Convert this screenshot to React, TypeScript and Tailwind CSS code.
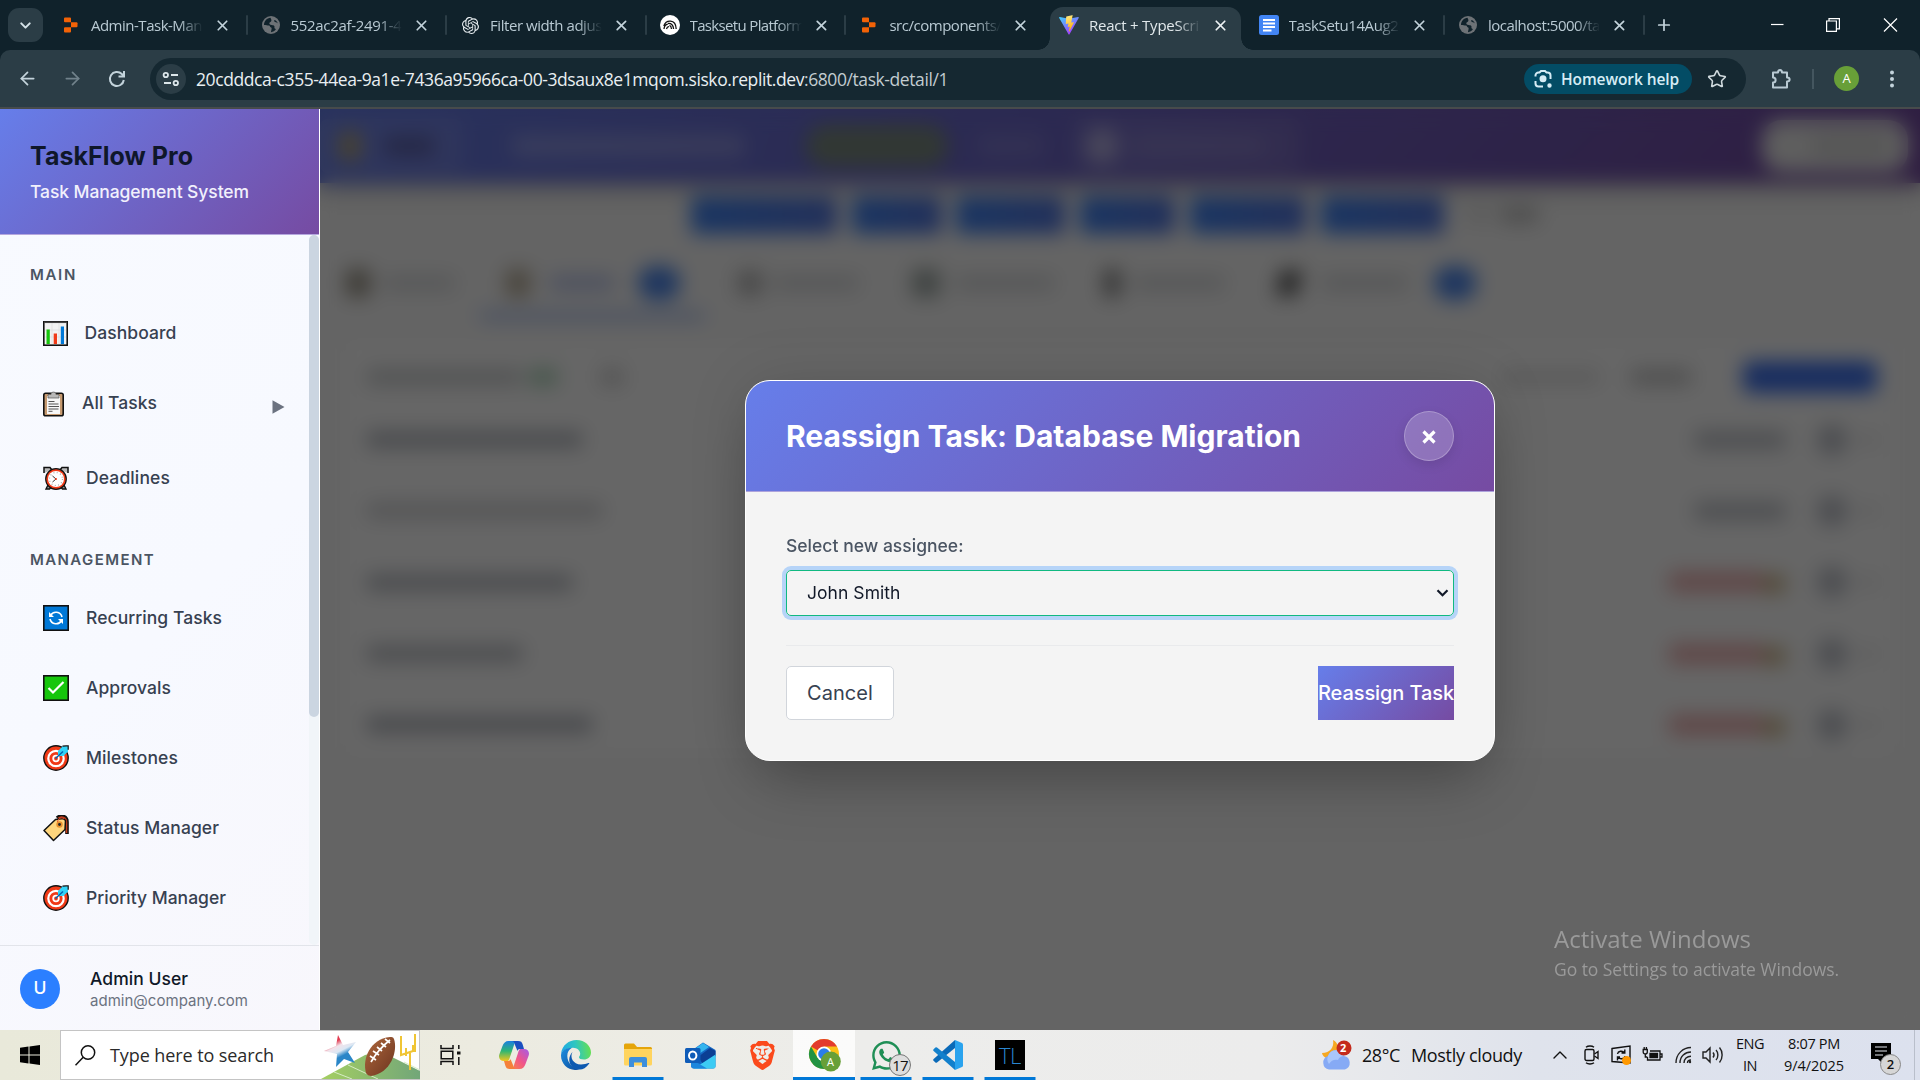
import { useLayoutEffect, useRef, type ReactNode } from 'react';
import { SiOpenai, SiBrave } from 'react-icons/si';
import { FaWhatsapp } from 'react-icons/fa';
import { ArrowLeft, ArrowRight, X, ChevronDown, ChevronUp, Plus, Star } from 'lucide-react';

/* One line of text whose tracking is set so that it spans `w` pixels. */
function Fit({ w, className = '', children }: { w: number; className?: string; children: string }) {
  const ref = useRef<HTMLSpanElement>(null);
  useLayoutEffect(() => {
    const el = ref.current;
    if (!el) return;
    el.style.letterSpacing = '0px';
    const natural = el.getBoundingClientRect().width;
    el.style.letterSpacing = `${(w - natural) / children.length}px`;
  }, [w, children]);
  return (
    <span ref={ref} className={`inline-block shrink-0 whitespace-nowrap ${className}`}>
      {children}
    </span>
  );
}

/* ---------- favicons ---------- */

const Replit = () => (
  <svg width="14" height="16" viewBox="0 0 14 16" fill="#f26207">
    <path d="M1 0.5h5a1 1 0 0 1 1 1V5.3H1a1 1 0 0 1-1-1V1.500a1 1 0 0 1 1-1z" />
    <path d="M7 5.300h5.500a1 1 0 0 1 1 1v3a1 1 0 0 1-1 1H7z" />
    <path d="M0 11.300a1 1 0 0 1 1-1h6v4.200a1 1 0 0 1-1 1H1a1 1 0 0 1-1-1z" />
  </svg>
);

const Globe = () => (
  <svg width="18" height="18" viewBox="0 0 18 18">
    <circle cx="9" cy="9" r="9" fill="#6d7276" />
    <path
      d="M8.500 1.800C5 2 2 5 2 9c2 0 3.500.4 5 .5 1.200.2.8 1.700 2 2 1 .2.600 1.500.4 2.500-.2.800-.5 1.500-.4 2.200 2-.2 4-1.500 5-3.200-1.500-.2-1.800-1-1.500-2.200.2-1-.8-1.600-2-1.600-1.300 0-3-.2-3.200-1.600C7.100 6 8.800 6.200 9.300 5c.4-1-.3-1.800-.8-3.200z"
      fill="#10222b"
    />
    <path d="M12.500 4c-1 1 .2 2.200 1.400 2.300 1 .1 1.400.8 2 1.200C15.500 6 14.300 4.600 12.500 4z" fill="#10222b" />
  </svg>
);

const Setu = () => (
  <svg width="20" height="20" viewBox="0 0 20 20">
    <circle cx="10" cy="10" r="10" fill="#fff" />
    <path
      d="M4 14c.3-3 1.500-4.500 3.800-4.800M3.800 11C5 7.500 7.500 6 10.500 6.200c3.500.3 5.500 3 5.700 7.800M6.500 14c.4-1.700 1.300-2.500 2.500-2.400M8 8.500c3-.5 5.300 1.500 5.600 5.500M9.500 10.300c1.300.5 1.900 1.700 2 3.700"
      fill="none"
      stroke="#111"
      strokeWidth="1.300"
    />
  </svg>
);

const Vite = () => (
  <svg width="20" height="20" viewBox="0 0 20 20">
    <defs>
      <linearGradient id="va" x1="0" y1="0" x2=".6" y2="1">
        <stop offset="0" stopColor="#41d1ff" />
        <stop offset="1" stopColor="#a838fe" />
      </linearGradient>
      <linearGradient id="vb" x1=".4" y1="0" x2=".6" y2="1">
        <stop offset="0" stopColor="#ffea83" />
        <stop offset="1" stopColor="#ffa800" />
      </linearGradient>
    </defs>
    <path d="M19.700 3 10.500 19.300a.6.6 0 0 1-1 0L.2 3a.6.6 0 0 1 .6-.9L10 3.700l9.100-1.600a.6.600 0 0 1 .6.900z" fill="url(#va)" />
    <path d="m14.200.1-6.800 1.300a.3.3 0 0 0-.2.3l-.4 7c0 .2.100.3.300.3l2-.4c.2 0 .4.1.3.3l-.600 2.700c0 .2.200.4.400.3l1.100-.3c.200 0 .400.100.400.300l-.9 4.400c0 .3.300.4.500.2l4.600-8.900c.1-.2-.1-.4-.3-.4l-2 .4c-.2 0-.4-.2-.3-.4L13.600.500c0-.2 0-.4.600-.4z" fill="url(#vb)" />
  </svg>
);

const Docs = () => (
  <svg width="20" height="20" viewBox="0 0 20 20">
    <rect width="20" height="20" rx="2.500" fill="#4285f4" />
    <path d="M4 5h12M4 8.500h12M4 12h12M4 15.500h8.500" stroke="#fff" strokeWidth="1.900" />
  </svg>
);

type TabInfo = { icon: ReactNode; text: string; w: number; active?: boolean; bar?: boolean };

const tabs: TabInfo[] = [
  { icon: <Replit />, text: 'Admin-Task-Man', w: 111, bar: true },
  { icon: <Globe />, text: '552ac2af-2491-4', w: 111, bar: true },
  { icon: <SiOpenai size={17} color="#e8eef1" />, text: 'Filter width adjus', w: 112, bar: true },
  { icon: <Setu />, text: 'Tasksetu Platform', w: 115, bar: true },
  { icon: <Replit />, text: 'src/components/', w: 112 },
  { icon: <Vite />, text: 'React + TypeScri', w: 110, active: true },
  { icon: <Docs />, text: 'TaskSetu14Aug2', w: 110, bar: true },
  { icon: <Globe />, text: 'localhost:5000/ta', w: 112, bar: true },
];

function Tab({ tab }: { tab: TabInfo }) {
  return (
    <div className="relative flex h-[50px] w-[199.6px] shrink-0 items-center">
      {tab.active && (
        <div className="absolute top-[7px] left-[4px] h-[43px] w-[191px] rounded-t-[13px] bg-[#2b3d46]">
          <div className="absolute bottom-0 -left-[12px] h-3 w-3 bg-[radial-gradient(circle_at_0_0,transparent_11.5px,#2b3d46_12px)]" />
          <div className="absolute -right-[12px] bottom-0 h-3 w-3 bg-[radial-gradient(circle_at_100%_0,transparent_11.5px,#2b3d46_12px)]" />
        </div>
      )}
      <div className="relative ml-[12px] flex w-[22px] justify-center">{tab.icon}</div>
      <div
        className={`relative ml-[9px] h-6 w-[112px] text-[15px] leading-[24px] [mask-image:linear-gradient(to_right,#000_78%,transparent)] ${tab.active ? 'text-[#e1e8eb]' : 'text-[#b9cad3]'}`}
      >
        <Fit w={tab.w}>{tab.text}</Fit>
      </div>
      <X className="relative ml-[11px]" size={17} strokeWidth={2.4} color={tab.active ? '#eef2f4' : '#c3d3db'} />
      {tab.bar && <div className="ml-[15px] h-5 w-[2px] rounded bg-[#2b3d46]" />}
    </div>
  );
}

function Browser() {
  return (
    <header className="h-[109px] shrink-0 bg-[#10222b] font-['Open_Sans',sans-serif]">
      <div className="flex h-[50px] items-center">
        <div className="ml-2 flex h-[34px] w-[35px] items-center justify-center rounded-[11px] bg-[#2b3d46]">
          <ChevronDown size={17} strokeWidth={2.8} color="#d5e2e8" />
        </div>
        <div className="ml-[5px] flex">
          {tabs.map((t) => (
            <Tab key={t.text} tab={t} />
          ))}
        </div>
        <Plus className="ml-[10px]" size={18} strokeWidth={2.3} color="#c3d3db" />
        <div className="mr-[22px] ml-auto flex items-center text-white">
          <svg width="14" height="14" viewBox="0 0 14 14">
            <path d="M1 6.500h12.500" stroke="currentColor" strokeWidth="1.200" />
          </svg>
          <svg className="ml-[42px]" width="14" height="14" viewBox="0 0 14 14" fill="none" stroke="currentColor" strokeWidth="1.200">
            <path d="M.6 3h9.800v10.400H.6zM3 3V.6h10.400v10.300h-3" />
          </svg>
          <svg className="ml-[43px]" width="15" height="14" viewBox="0 0 15 14" stroke="currentColor" strokeWidth="1.200">
            <path d="M1 .5 14 13.500M14 .5 1 13.500" />
          </svg>
        </div>
      </div>
      <div className="flex h-[59px] items-center rounded-t-[10px] border-b-2 border-[#474b4c] bg-[#2b3d46]">
        <ArrowLeft className="ml-[17px]" size={21} strokeWidth={2} color="#c3d3db" />
        <ArrowRight className="ml-[24px]" size={21} strokeWidth={2} color="#71828b" />
        <svg className="ml-[25px]" width="18" height="18" viewBox="0 0 18 18" fill="none" stroke="#c3d3db" strokeWidth="2">
          <path d="M15.800 10A7 7 0 1 1 13.800 4L16 6.200M16 1v5.500h-5.500" />
        </svg>
        <div className="mt-px ml-[24px] flex h-[42px] w-[1596px] items-center rounded-full bg-[#152831]">
          <div className="ml-[6px] flex h-[30px] w-[30px] items-center justify-center rounded-full bg-[#2b3d46]">
            <svg width="18" height="16" viewBox="0 0 18 16" fill="none" stroke="#dce6ea" strokeWidth="1.800">
              <circle cx="3.800" cy="4" r="2.200" />
              <path d="M9 4h7M2 12h7" />
              <circle cx="13.800" cy="12" r="2.200" />
            </svg>
          </div>
          <div className="ml-[10px] flex text-[17.5px] text-[#e9eff2]">
            <Fit w={608}>20cdddca-c355-44ea-9a1e-7436a95966ca-00-3dsaux8e1mqom.sisko.replit.dev</Fit>
            <Fit w={144} className="text-[#c2ccd0]">:6800/task-detail/1</Fit>
          </div>
          <div className="ml-auto flex h-[30px] w-[168px] items-center rounded-full bg-[#034c65] text-[#d6ecf5]">
            <svg className="ml-[10px]" width="19" height="19" viewBox="0 0 19 19" fill="none" stroke="currentColor" strokeWidth="2">
              <path d="M1.500 6.500v-1a3 3 0 0 1 3-3h1l1.500-1.500h4l1.500 1.500h1a3 3 0 0 1 3 3v3.500M1.500 11v2.500a3 3 0 0 0 3 3H9" />
              <circle cx="9" cy="8.800" r="2.500" fill="currentColor" />
              <circle cx="15.500" cy="15.500" r="1.200" fill="currentColor" />
            </svg>
            <Fit w={118} className="mt-px ml-[8px] text-[15.5px] font-semibold">Homework help</Fit>
          </div>
          <Star className="mr-[19px] ml-[15px]" size={20} strokeWidth={1.9} color="#d0dade" />
        </div>
        <svg className="ml-[24px]" width="22" height="22" viewBox="0 0 22 22" fill="none" stroke="#b9cad3" strokeWidth="2">
          <path d="M3 4.500h5c0-3.500 4-3.500 4 0h5v5c3.500 0 3.500 4 0 4v6H3v-5c3.500 0 3.500-5 0-5z" strokeLinejoin="round" />
        </svg>
        <div className="ml-[20px] h-5 w-[2px] bg-[#44565f]" />
        <div className="ml-[20px] flex h-[25px] w-[25px] items-center justify-center rounded-full bg-[#689f38] text-[13px] text-white">A</div>
        <svg className="ml-[30px]" width="6" height="18" viewBox="0 0 6 18" fill="#c3d3db">
          <circle cx="3" cy="2.500" r="2" />
          <circle cx="3" cy="9" r="2" />
          <circle cx="3" cy="15.500" r="2" />
        </svg>
      </div>
    </header>
  );
}

/* ---------- sidebar ---------- */

const Chart = () => (
  <svg width="25" height="25" viewBox="0 0 25 25">
    <rect x=".8" y=".8" width="23.400" height="23.400" fill="#f2f2f2" stroke="#111" strokeWidth="1.600" />
    <path d="M9 2v21M16 2v21M2 9h21M2 16h21" stroke="#ddd" strokeWidth=".7" />
    <path d="M1 1.300h23" stroke="#444" strokeWidth="1.500" />
    <path d="M3.500 8.500h3.300V23H3.500z" fill="#16c60c" />
    <path d="M10.700 12.500H14V23h-3.300z" fill="#f03a17" />
    <path d="M17.800 5.500H21V23h-3.200z" fill="#0078d7" />
  </svg>
);

const Clip = () => (
  <svg width="21" height="26" viewBox="0 0 21 26">
    <rect x=".8" y="2.300" width="19.400" height="22.500" rx="1.800" fill="#c69a70" stroke="#111" strokeWidth="1.600" />
    <path d="M4 5h13v18H4z" fill="#f7f7f7" />
    <path d="M5 3.500h3C8 .3 13 .3 13 3.500h3V7H5z" fill="#b8b8b8" stroke="#555" strokeWidth=".7" />
    <path d="M5.500 10.500h6M5.500 13h10M5.500 15.500h10.500M5.500 18h10M5.500 20.300h4" stroke="#555" strokeWidth="1" />
  </svg>
);

const Clock = () => (
  <svg width="26" height="25" viewBox="0 0 26 25">
    <path d="M1 7V1.500h6L9 4M25 7V1.500h-6L17 4" fill="#bbb" stroke="#111" strokeWidth="1.500" />
    <path d="m5 19-2 4h3.500l2-2M21 19l2 4h-3.500l-2-2" fill="#999" stroke="#111" strokeWidth="1.400" />
    <circle cx="13" cy="13" r="10.300" fill="#f03a17" stroke="#111" strokeWidth="1.200" />
    <circle cx="13" cy="13" r="8" fill="#fff" />
    <circle cx="13" cy="13" r="6.500" fill="none" stroke="#aaa" strokeWidth="1.200" strokeDasharray="1 2.400" />
    <path d="m9.500 10 3.500 3-3.500 3" fill="none" stroke="#333" strokeWidth="1" />
    <circle cx="13" cy="13" r="1" fill="#f03a17" />
  </svg>
);

const Cycle = () => (
  <svg width="26" height="26" viewBox="0 0 26 26">
    <rect x=".8" y=".8" width="24.400" height="24.400" fill="#0078d7" stroke="#111" strokeWidth="1.600" />
    <path d="M7.500 10.500A6.200 6.200 0 0 1 19 12M18.500 15.500A6.200 6.200 0 0 1 7 14" fill="none" stroke="#fff" strokeWidth="1.600" />
    <path d="M6 7v5h5zM20 19v-5h-5z" fill="#fff" />
  </svg>
);

const Check = () => (
  <svg width="26" height="26" viewBox="0 0 26 26">
    <rect x=".8" y=".8" width="24.400" height="24.400" fill="#16c60c" stroke="#111" strokeWidth="1.600" />
    <path d="m5.500 13 4.500 4.500L20.500 7" fill="none" stroke="#fff" strokeWidth="2.200" />
  </svg>
);

const Target = () => (
  <svg width="26" height="26" viewBox="0 0 26 26">
    <circle cx="13" cy="13" r="12.200" fill="#f03a17" stroke="#111" strokeWidth="1.400" />
    <circle cx="13" cy="13.500" r="7.700" fill="none" stroke="#fff" strokeWidth="2.200" />
    <circle cx="13" cy="13.500" r="2.800" fill="none" stroke="#fff" strokeWidth="1.800" />
    <path d="M15 10V6l5-5 5.300.2L25 6.500 20.500 11 16 11z" fill="#31d2f7" />
    <path d="M19.500 1.200 23 .8h2.200v4" fill="none" stroke="#111" strokeWidth="1.200" />
    <path d="m12.500 13.500 7.500-7" stroke="#0063b1" strokeWidth="1.400" />
  </svg>
);

const Tag = () => (
  <svg width="26" height="27" viewBox="0 0 26 27">
    <path d="M14 3C18-.5 24 1 24 7v12" fill="none" stroke="#111" strokeWidth="3.600" />
    <path d="M15 3.500C18.500.800 23.500 2 23.500 7.500V18" fill="none" stroke="#c23b16" strokeWidth="1.600" />
    <path d="m1 15.500 11.500-11 7.500-1 2.500 2-.5 9-11.500 11z" fill="#ffd67d" stroke="#111" strokeWidth="1.500" strokeLinejoin="round" />
    <circle cx="16.500" cy="9.500" r="3.200" fill="#e8912d" />
    <circle cx="16.500" cy="9.500" r="1.400" fill="#222" />
    <path d="M14.500 7C15 3.500 18 2 21 3.500" fill="none" stroke="#e8492d" strokeWidth="1" />
  </svg>
);

function NavItem({ icon, w, gap, h, children }: { icon: ReactNode; w: number; gap: string; h: string; children: string }) {
  return (
    <div className={`flex shrink-0 items-center pl-[42.5px] ${h}`}>
      {icon}
      <Fit w={w} className={`text-[17.5px] font-[450] text-[#374151] ${gap}`}>{children}</Fit>
      {children === 'All Tasks' && (
        <svg className="mt-[6px] ml-[115px]" width="13" height="14" viewBox="0 0 13 14">
          <path d="M.5.300v13.400L12.500 7z" fill="#6b7280" />
        </svg>
      )}
    </div>
  );
}

function Sidebar() {
  return (
    <aside className="flex w-[320px] shrink-0 flex-col border-r border-white bg-[linear-gradient(135deg,#f8faff_0%,#f7f9ff_55%,#f8f7fc_100%)] font-['Inter',sans-serif]">
      <div className="flex h-[126px] shrink-0 flex-col items-start border-b border-[#b5a7de] bg-[linear-gradient(135deg,#667eea,#764ba2)] pt-[29px] pl-[30px]">
        <Fit w={163} className="text-[25px] leading-[36px] font-bold text-[#0f172a]">TaskFlow Pro</Fit>
        <Fit w={219} className="text-[17.5px] leading-[36px] font-[450] text-[#f1f0fc]">Task Management System</Fit>
      </div>
      <div className="flex h-[710px] shrink-0">
        <nav className="flex flex-1 flex-col">
          <Fit w={47} className="mt-[29px] ml-[30px] self-start text-[15px] leading-[22px] font-semibold text-[#4b5563]">MAIN</Fit>
          <div className="mt-[12px] flex flex-col">
            <NavItem icon={<Chart />} w={92} gap="ml-[17px]" h="h-[70px]">Dashboard</NavItem>
            <NavItem icon={<Clip />} w={75} gap="ml-[18.5px]" h="h-[71px]">All Tasks</NavItem>
            <NavItem icon={<Clock />} w={84} gap="ml-[17.5px]" h="h-[78px]">Deadlines</NavItem>
          </div>
          <Fit w={125} className="mt-[32px] ml-[30px] self-start text-[15px] leading-[22px] font-semibold text-[#4b5563]">MANAGEMENT</Fit>
          <div className="mt-[12px] flex flex-col">
            <NavItem icon={<Cycle />} w={136} gap="ml-[17.5px]" h="h-[70px]">Recurring Tasks</NavItem>
            <NavItem icon={<Check />} w={85} gap="ml-[17.5px]" h="h-[70px]">Approvals</NavItem>
            <NavItem icon={<Target />} w={92} gap="ml-[17.5px]" h="h-[70px]">Milestones</NavItem>
            <NavItem icon={<Tag />} w={133} gap="ml-[17.5px]" h="h-[70px]">Status Manager</NavItem>
            <NavItem icon={<Target />} w={140} gap="ml-[17.5px]" h="h-[70px]">Priority Manager</NavItem>
          </div>
        </nav>
        <div className="w-[10px] rounded-[5px] bg-[#f1f5f9]">
          <div className="h-[482px] rounded-[5px] bg-[#cbd5e1]" />
        </div>
      </div>
      <div className="flex flex-1 items-center border-t border-[#e2e4ea] pt-px pl-5">
        <div className="flex h-10 w-10 items-center justify-center rounded-full bg-[#2b7fff] text-[17.5px] font-medium text-white">U</div>
        <div className="ml-[30px] flex flex-col items-start">
          <Fit w={98} className="text-[17.5px] leading-[23px] font-[450] text-[#101828]">Admin User</Fit>
          <Fit w={158} className="text-[15px] leading-[21px] text-[#6b7280]">admin@company.com</Fit>
        </div>
      </div>
    </aside>
  );
}

/* ---------- dimmed page behind the dialog ---------- */

const actionButtons = ['w-[146px]', 'w-[90px] ml-[15px]', 'w-[109px] ml-[14px]', 'w-[95px] ml-[15px]', 'w-[116px] ml-[15px]', 'w-[123px] ml-[15px]'];

const taskRows = [
  { left: 'w-[215px] bg-[#b0b4bc]', late: false },
  { left: 'w-[235px] bg-[#cfd0d3]', late: false },
  { left: 'w-[205px] bg-[#b3b7be]', late: true },
  { left: 'w-[155px] bg-[#b8bbc1]', late: true },
  { left: 'w-[225px] bg-[#acb0b8]', late: true },
];

function DetailPage() {
  return (
    <div className="flex h-full flex-col bg-[#fafafa]">
      <div className="flex h-[74px] shrink-0 items-center bg-[linear-gradient(135deg,#667eea,#764ba2)] shadow-[0_5px_20px_rgba(0,0,0,0.25)]">
        <div className="flex h-[54px] w-[142px] items-center rounded-lg bg-white/10 pl-[20px]">
          <div className="h-7 w-5 rounded bg-[#b8a870]" />
          <div className="ml-[24px] h-[18px] w-[50px] bg-[#4a4880]/60" />
        </div>
        <div className="ml-[50px] h-[22px] w-[232px] bg-white/25" />
        <div className="ml-[62px] h-[42px] w-[142px] rounded-[20px] bg-[#7c8c80]" />
        <div className="ml-[30px] h-[24px] w-[66px] bg-white/12" />
        <div className="ml-[30px] flex h-[54px] w-[226px] items-center rounded-lg bg-white/10 pl-[12px]">
          <div className="h-9 w-8 rounded-full bg-white/45" />
          <div className="ml-[16px] h-[18px] w-[130px] bg-white/12" />
        </div>
        <div className="mr-[12px] ml-auto flex h-[52px] w-[146px] items-center justify-end rounded-[20px] bg-[#ececec] pr-[20px]">
          <div className="h-5 w-[76px] bg-[#d4d4d4]" />
        </div>
      </div>
      <div className="flex h-[63px] shrink-0 items-center pl-[371px]">
        {actionButtons.map((b) => (
          <div key={b} className={`h-[38px] shrink-0 bg-[linear-gradient(90deg,#4084f4,#5578e0)] ${b}`} />
        ))}
        <div className="ml-[24px] h-4 w-5 bg-[#e0e0e0]" />
        <div className="ml-[12px] h-4 w-[38px] bg-[#c0c0c0]" />
      </div>
      <div className="flex h-[73px] shrink-0 items-center">
        <div className="ml-[26px] h-[28px] w-[24px] rounded bg-[#9a9486]" />
        <div className="ml-[14px] h-[14px] w-[70px] bg-[#d6d8da]" />
        <div className="relative ml-[26px] flex h-full w-[224px] items-center border-b-[6px] border-[#88a8ee] pt-[6px]">
          <div className="ml-[26px] h-[28px] w-[24px] rounded bg-[#b8ad98]" />
          <div className="ml-[20px] h-[14px] w-[64px] bg-[#b8c4ec]" />
          <div className="ml-[24px] h-[34px] w-[42px] rounded-[16px] bg-[#4a86ee]" />
        </div>
        <div className="ml-[34px] h-[24px] w-[24px] bg-[#b4b4b4]" />
        <div className="ml-[12px] h-[14px] w-[84px] bg-[#d4d6d8]" />
        <div className="ml-[54px] h-[28px] w-[28px] bg-[#9fa9a5]" />
        <div className="ml-[16px] h-[14px] w-[98px] bg-[#d4d6d8]" />
        <div className="ml-[50px] h-[28px] w-[16px] bg-[#808080]" />
        <div className="ml-[14px] h-[14px] w-[90px] bg-[#d4d6d8]" />
        <div className="ml-[54px] h-[26px] w-[22px] -skew-x-12 bg-[#606060]" />
        <div className="ml-[22px] h-[14px] w-[86px] bg-[#d4d6d8]" />
        <div className="ml-[26px] h-[34px] w-[42px] rounded-[16px] bg-[#4a86ee]" />
      </div>
      <div className="mx-[25px] mt-[24px] h-[410px] shrink-0 rounded-lg bg-white">
        <div className="mt-[6px] flex h-[55px] items-center pl-[22px]">
          <div className="h-4 w-[154px] bg-[#cccfd0]" />
          <div className="ml-[8px] h-4 w-[28px] bg-[#a8d4b6]" />
          <div className="ml-[44px] h-4 w-[22px] bg-[#cccccc]" />
          <div className="mr-[32px] ml-auto h-3 w-[96px] bg-[#dcdcdc]" />
          <div className="mr-[52px] h-4 w-[60px] bg-[#c6c6c6]" />
          <div className="mr-[18px] h-[32px] w-[134px] rounded-md bg-[#3b70ee]" />
        </div>
        {taskRows.map((r, i) => (
          <div key={i} className="flex h-[71.3px] items-center pl-[22px]">
            <div className={`h-[15px] ${r.left}`} />
            <div className="ml-auto flex items-center">
              {r.late ? (
                <>
                  <div className="h-[20px] w-[94px] rounded bg-[#eeb0b0]" />
                  <div className="mt-[4px] h-[18px] w-[22px] bg-[#cdb586]" />
                </>
              ) : (
                <div className="h-[18px] w-[90px] bg-[#c2c5cb]" />
              )}
              <div className="ml-[32px] h-[32px] w-[30px] rounded-full bg-[#bfc2ca]" />
              <div className="mr-[18px] ml-[12px] h-[10px] w-[18px] bg-[#e2e2e2]" />
            </div>
          </div>
        ))}
      </div>
    </div>
  );
}

function Dialog() {
  return (
    <div className="absolute top-[271px] left-[425px] flex h-[381px] w-[750px] flex-col overflow-hidden rounded-[25px] border border-white bg-[#f4f4f4] font-['Inter',sans-serif] shadow-[0_31px_62px_-15px_rgba(0,0,0,0.25),0_0_60px_rgba(0,0,0,0.12)]">
      <div className="flex h-[111px] shrink-0 items-center justify-between border-b border-[#ada3dc] bg-[linear-gradient(135deg,#667eea,#764ba2)] px-[40px]">
        <Fit w={515} className="text-[30px] font-bold text-white">Reassign Task: Database Migration</Fit>
        <div className="flex h-[50px] w-[50px] items-center justify-center rounded-full border border-white/25 bg-white/20 shadow-[0_4px_12px_rgba(0,0,0,0.1)]">
          <svg className="mt-[2px]" width="14" height="14" viewBox="0 0 14 14" stroke="#fff" strokeWidth="3.200">
            <path d="m1.500 1.500 11 11M12.500 1.500l-11 11" />
          </svg>
        </div>
      </div>
      <div className="flex flex-col px-[40px] pt-[41px]">
        <Fit w={177.500} className="self-start text-[17.5px] leading-[26px] font-[450] text-[#4b5563]">Select new assignee:</Fit>
        <div className="mt-[11px] flex h-[46px] items-center justify-between rounded-[5px] border border-[#10b981] pr-[4px] pl-[20px] shadow-[0_0_0_4px_#b6d4f8]">
          <Fit w={93.500} className="text-[17.5px] text-[#111827]">John Smith</Fit>
          <svg width="13" height="8" viewBox="0 0 13 8" fill="none" stroke="#111827" strokeWidth="2.200">
            <path d="m1.500 1.200 5 5 5-5" />
          </svg>
        </div>
        <div className="mt-[29px] flex justify-between border-t border-[#e9eaec] pt-[20px]">
          <div className="flex h-[54px] w-[108px] items-center rounded-[5px] border border-[#d1d5db] bg-white pl-[20px]">
            <Fit w={66} className="text-[20px] text-[#374151]">Cancel</Fit>
          </div>
          <div className="flex h-[54px] w-[136px] items-center bg-[linear-gradient(135deg,#667eea,#764ba2)]">
            <Fit w={136} className="text-[20px] font-[450] text-white">Reassign Task</Fit>
          </div>
        </div>
      </div>
    </div>
  );
}

/* ---------- taskbar ---------- */

const Football = () => (
  <svg width="100" height="48" viewBox="0 0 100 48">
    <defs>
      <linearGradient id="field" x1="0" x2="1">
        <stop offset="0" stopColor="#a5cf62" />
        <stop offset="1" stopColor="#72a679" />
      </linearGradient>
      <linearGradient id="ball" x1="0" y1="0" x2="1" y2="1">
        <stop offset="0" stopColor="#b0683c" />
        <stop offset="1" stopColor="#6b3420" />
      </linearGradient>
      <linearGradient id="star" x1="0" y1="0" x2=".5" y2="1">
        <stop offset=".3" stopColor="#e23a50" />
        <stop offset=".45" stopColor="#f2e3ea" />
        <stop offset=".6" stopColor="#dce8f4" />
        <stop offset=".75" stopColor="#2a86c8" />
      </linearGradient>
    </defs>
    <path d="M1 48 45 24 60 20 100 40v8H1z" fill="url(#field)" />
    <path d="m14 41 18 7M28 34l30 14M84 31l16 8" stroke="#d6ebc4" strokeWidth="1" />
    <path d="m18 4 5 10 13-3-8 10 7 11-11-4-8 8 1-13L4 20l12-5z" fill="url(#star)" />
    <path d="M74 8c4 12-3 34-23 37-2 0-4-1-5-3C42 28 50 8 70 6c2 0 3 0 4 2z" fill="url(#ball)" />
    <path d="M51 31c4-7 10-15 19-22M50 25l6 4M53 20l6 4M57 16l5 4M61 12l5 4M65 8l5 4" stroke="#fff" strokeWidth="1.700" fill="none" />
    <path d="M81 8v16l12-4M93 14V21M86 25v-8M90 22v17M95 3v18M81 8V5" stroke="#f0c535" strokeWidth="2" fill="none" />
  </svg>
);

const Copilot = () => (
  <svg width="30" height="28" viewBox="0 0 30 28">
    <defs>
      <linearGradient id="cpa" x1="0" y1="0" x2="0" y2="1">
        <stop offset="0" stopColor="#1b7fe0" />
        <stop offset=".5" stopColor="#2fb673" />
        <stop offset="1" stopColor="#f4c51c" />
      </linearGradient>
      <linearGradient id="cpb" x1="1" y1="0" x2="0" y2="1">
        <stop offset="0" stopColor="#a45be8" />
        <stop offset=".5" stopColor="#f0548a" />
        <stop offset="1" stopColor="#fb8b3d" />
      </linearGradient>
    </defs>
    <path d="M21 8h4c4 0 6 3 4.500 7l-3 8c-1 3-3 5-6 5H10c3 0 4-1 5-4l4-12c.500-2 1-3 2-4z" fill="url(#cpb)" />
    <path d="M9 20H5c-4 0-6-3-4.500-7l3-8c1-3 3-5 6-5H20c-3 0-4 1-5 4l-4 12c-.5 2-1 3-2 4z" fill="url(#cpa)" />
    <path d="M13 0h6c3 0 4 1 4.700 3.500L25 8h-4c-1.500 0-2 .5-2.500 2L16 4c-.6-2-1-4-3-4z" fill="#1a4fc0" />
    <path d="M17 28h-6c-3 0-4-1-4.700-3.500L5 20h4c1.500 0 2-.5 2.500-2L14 24c.6 2 1 4 3 4z" fill="#f5813a" />
  </svg>
);

const Edge = () => (
  <svg width="30" height="30" viewBox="0 0 30 30">
    <defs>
      <linearGradient id="ea" x1="0" y1=".5" x2="1" y2=".4">
        <stop offset="0" stopColor="#1ea7e6" />
        <stop offset=".5" stopColor="#2fc6c0" />
        <stop offset="1" stopColor="#66e04e" />
      </linearGradient>
      <linearGradient id="eb" x1="0" y1="0" x2="1" y2="1">
        <stop offset="0" stopColor="#1b8fe0" />
        <stop offset="1" stopColor="#0c4a9c" />
      </linearGradient>
    </defs>
    <path d="M0 14C1 5 8 0 15.500 0 24 0 30 6 30 12.500c0 4.500-3.500 7-7 7-3 0-5-1-5-2.300 0-.9 1.200-1.300 1.200-3.700 0-3-3-5.800-7.200-5.800C6 7.700 1 11 0 14z" fill="url(#ea)" />
    <path d="M0 15.500C0 10.500 5 7.700 11 7.700c-3 1.500-4.700 4.500-4.700 8.300 0 7 5.700 12.300 12 13.500C9 32 0 25 0 15.500z" fill="url(#eb)" />
    <path d="M11.500 12c-3 5 .5 12.500 8.500 12.500 3 0 5.500-.8 7.500-1.500.8-.3 1 .2.600.7C25 28 21 30 18 29.500 9 29 5 19 11.500 12z" fill="#0d59b0" />
  </svg>
);

const Explorer = () => (
  <svg width="28" height="24" viewBox="0 0 28 24">
    <path d="M0 2a1.500 1.500 0 0 1 1.500-1.500H10L13 4h13.500A1.500 1.500 0 0 1 28 5.500V10H0z" fill="#e5a50a" />
    <path d="M0 6h28v15a1.500 1.500 0 0 1-1.500 1.500h-25A1.500 1.500 0 0 1 0 21z" fill="#ffd45e" />
    <path d="M5 24v-8a2 2 0 0 1 2-2h14a2 2 0 0 1 2 2v8h-5v-4.500h-8V24z" fill="#3d8fdc" />
  </svg>
);

const Outlook = () => (
  <svg width="31" height="27" viewBox="0 0 31 27">
    <path d="M6 9 18 .5 30.500 8v16a2.500 2.500 0 0 1-2.500 2.500H9A3 3 0 0 1 6 24z" fill="#1568c4" />
    <path d="M8 8 18 1l6 4-13 9z" fill="#35b5ee" />
    <path d="m13 15 12-9 5.500 3v5L18 22z" fill="#0b3f94" />
    <path d="m9 26.500 21.500-14V24a2.500 2.500 0 0 1-2.500 2.500z" fill="#3ccbf4" />
    <path d="M6 17 22 26.500H9A3 3 0 0 1 6 24z" fill="#1b86dd" />
    <rect x="0" y="6" width="15.500" height="15" rx="1.500" fill="#0f5cb8" />
    <ellipse cx="7.700" cy="13.500" rx="3.700" ry="4.100" fill="none" stroke="#fff" strokeWidth="2" />
  </svg>
);

const Chrome = () => (
  <svg width="34" height="34" viewBox="0 0 34 34">
    <circle cx="17" cy="16" r="15" fill="#fbc116" />
    <path d="M17 16 4 8.500A15 15 0 0 1 30 8.500H17z" fill="#e33b2e" />
    <path d="M4 8.500A15 15 0 0 0 17 31l6.500-11.300L10.500 19.700z" fill="#229342" />
    <circle cx="17" cy="16" r="7.500" fill="#fff" />
    <circle cx="17" cy="16" r="5.800" fill="#2a7de9" />
    <circle cx="23.800" cy="23.500" r="10" fill="#689f38" />
  </svg>
);

const VsCode = () => (
  <svg width="30" height="30" viewBox="0 0 30 30">
    <path d="M22 0v8L4 22.500a1.300 1.300 0 0 1-1.600 0l-1.800-1.700a1.200 1.200 0 0 1 0-1.700z" fill="#0a6ab8" />
    <path d="M22 30v-8L4 7.500a1.300 1.300 0 0 0-1.600 0L.6 9.200a1.200 1.200 0 0 0 0 1.700z" fill="#1280cc" />
    <path d="M22 0 29 3a1.800 1.800 0 0 1 1 1.600v20.800A1.800 1.800 0 0 1 29 27l-7 3z" fill="#2aa3ee" />
  </svg>
);

const Weather = () => (
  <svg width="32" height="30" viewBox="0 0 32 30">
    <path d="M12 0c1.500 7-3 13-11 13 1 5 8 8 13 3s4-13-2-16z" fill="#f6a821" />
    <path d="M8 29.500a7 7 0 0 1-1-13.500A8.500 8.500 0 0 1 23 16a7 7 0 0 1 1 13.500z" fill="#86aaf5" />
    <path d="M8 24a8 8 0 0 1-1-8 8.500 8.500 0 0 1 16 0c-2 0-5 1-6 4-3-1-7 0-9 4z" fill="#a9c6fb" />
    <circle cx="23" cy="8" r="7.500" fill="#c42b1c" />
  </svg>
);

function AppButton({ className = '', children, open }: { className?: string; children: ReactNode; open?: string }) {
  return (
    <div className={`relative flex h-[50px] w-[62px] shrink-0 items-center justify-center ${className}`}>
      {children}
      {open && <div className={`absolute bottom-0 left-1/2 h-[3px] -translate-x-1/2 bg-[#0078d7] ${open}`} />}
    </div>
  );
}

function Taskbar() {
  return (
    <footer className="flex h-[50px] shrink-0 items-center bg-[linear-gradient(90deg,#e9e9da_0%,#ecebe0_25%,#ededeb_45%,#ececec_66%,#dfe3ec_80%,#dce1ee_100%)] font-['Open_Sans',sans-serif] text-[#111]">
      <svg className="ml-[20px]" width="20" height="20" viewBox="0 0 20 20">
        <path d="M0 2.800 8.500 1.600v7.900H0zM9.500 1.500 20 0v9.500H9.500zM0 10.500h8.500v7.900L0 17.200zM9.500 10.500H20V20L9.500 18.500z" />
      </svg>
      <div className="ml-[20px] flex h-[50px] w-[360px] items-center border border-[#c4c4c4] bg-white">
        <svg className="ml-[14px]" width="21" height="21" viewBox="0 0 21 21" fill="none" stroke="#111" strokeWidth="1.500">
          <circle cx="13" cy="7.500" r="6.700" />
          <path d="M8.200 12.300.5 20.300" />
        </svg>
        <Fit w={164} className="ml-[14px] text-[18px] text-[#2a2a2a]">Type here to search</Fit>
        <div className="-mr-px ml-auto">
          <Football />
        </div>
      </div>
      <svg className="ml-[20px]" width="21" height="20" viewBox="0 0 21 20" fill="none" stroke="#111" strokeWidth="1.500">
        <path d="M1 0v3.500h12V0M1 20v-3.500h12V20M1.200 6.200h11.600v7.600H1.200zM18.800 0v4M18.800 12v8" />
        <path d="M17 8h3.500" strokeWidth="3" />
      </svg>
      <AppButton className="ml-[22px]"><Copilot /></AppButton>
      <AppButton><Edge /></AppButton>
      <AppButton open="w-[51px]"><Explorer /></AppButton>
      <AppButton><Outlook /></AppButton>
      <AppButton><SiBrave size={29} color="#fb4a1c" /></AppButton>
      <AppButton className="bg-white/75" open="w-[62px]">
        <Chrome />
        <span className="absolute top-[24px] left-[34px] text-[11px] leading-[16px] text-white">A</span>
      </AppButton>
      <AppButton open="w-[51px]">
        <FaWhatsapp size={33} color="#1f8f56" />
        <span className="absolute top-[24px] left-[34px] flex h-[22px] w-[22px] items-center justify-center rounded-full border border-[#777] bg-[#dedede] text-[15px] tracking-[-0.8px]">17</span>
      </AppButton>
      <AppButton open="w-[51px]"><VsCode /></AppButton>
      <AppButton open="w-[51px]">
        <div className="flex h-[30px] w-[30px] items-center justify-center bg-black text-[22px] leading-none font-light tracking-[-0.5px] text-[#2a86d0]">TL</div>
      </AppButton>
      <div className="relative ml-auto">
        <Weather />
        <span className="absolute top-0 left-[19px] text-[11px] leading-[16px] font-bold text-white">2</span>
      </div>
      <Fit w={38} className="ml-[9px] text-[18px]">28°C</Fit>
      <Fit w={111} className="ml-[11px] text-[18px]">Mostly cloudy</Fit>
      <ChevronUp className="ml-[26px]" size={24} strokeWidth={1.4} />
      <svg className="ml-[12px]" width="15" height="20" viewBox="0 0 15 20" fill="none" stroke="#111" strokeWidth="1.400">
        <rect x="1" y="4.500" width="9" height="11" rx="1.500" />
        <path d="m10.500 9 3.500-2.500v7L10.500 11M2 2.200c2-1.600 6-1.600 8 0M2 17.800c2 1.600 6 1.600 8 0" />
      </svg>
      <svg className="ml-[12px]" width="21" height="20" viewBox="0 0 21 20" fill="none" stroke="#111" strokeWidth="1.400">
        <path d="M1 3.500 19 1v17L1 16.500z" />
        <path d="M6.500 9c.5-3 5-4 7-1M13.800 4.500V8h-3.300M14 11c-.5 3-5 4-7 1M6.500 15.500V12H9" />
        <circle cx="15.500" cy="15.500" r="4.500" fill="#ff9800" stroke="none" />
      </svg>
      <svg className="ml-[10px]" width="21" height="16" viewBox="0 0 21 16" fill="none" stroke="#111" strokeWidth="1.300">
        <path d="M8 4h10v9H5.500v-3M18.500 7h1.500v3h-1.500M1.200 2.500h4.100v2.500c0 1.400-1 2-2 2s-2.100-.6-2.100-2zM2.200 0v2.500M4.400 0v2.500M3.300 7v3h2" />
        <path d="M8 6.500h7.500v4H8z" fill="#111" />
      </svg>
      <svg className="ml-[12px]" width="17" height="18" viewBox="0 0 17 18" fill="none" stroke="#222" strokeWidth="1.400">
        <path d="M1 17C1 8 8 1.500 16 1.500M5 17C5 10.500 10 6 16 6M9 17c0-4 3-6.800 7-6.800M12.500 17c0-2 1.500-3 3.500-3" />
        <circle cx="15" cy="16" r="1.200" fill="#222" stroke="none" />
      </svg>
      <svg className="ml-[10px]" width="22" height="18" viewBox="0 0 22 18" fill="none" stroke="#222" strokeWidth="1.400">
        <path d="M1 6v6h3l4 4V2L4 6zM11 6.500c1.200 1.400 1.200 3.600 0 5M14 4c2.500 2.500 2.500 7.500 0 10M17.500 1.500c3.500 4 3.500 11 0 15" />
      </svg>
      <div className="ml-[12px] flex flex-col items-center text-[14.5px] leading-[22px]">
        <Fit w={28}>ENG</Fit>
        <Fit w={14}>IN</Fit>
      </div>
      <div className="ml-[20px] flex flex-col items-center text-[14.5px] leading-[22px]">
        <Fit w={52}>8:07 PM</Fit>
        <Fit w={60}>9/4/2025</Fit>
      </div>
      <div className="relative ml-[27px] h-[32px] w-[31px]">
        <svg className="mt-[4px]" width="20" height="22" viewBox="0 0 20 22">
          <path d="M0 0h20v16H12v5l-5-5H0z" fill="#000" />
          <path d="M4 4h12M4 8h12M4 12h8" stroke="#e4e8f0" strokeWidth="1.200" />
        </svg>
        <span className="absolute top-[15px] left-[9px] flex h-[21px] w-[21px] items-center justify-center rounded-full border border-[#888] bg-[#d6d6d6] text-[13px] font-semibold">2</span>
      </div>
      <div className="ml-[12px] h-full w-[6px] border-l border-[#b9bfcb]" />
    </footer>
  );
}

export default function App() {
  return (
    <div className="flex h-[1080px] w-[1920px] flex-col overflow-hidden">
      <Browser />
      <main className="flex h-[921px] shrink-0">
        <Sidebar />
        <section className="relative w-[1600px] overflow-hidden">
          <DetailPage />
          <div className="absolute inset-0 bg-black/60 backdrop-blur-[10px]" />
          <Dialog />
          <div className="absolute top-[812px] left-[1234px] flex flex-col items-start font-['Open_Sans',sans-serif] text-[#9a9a9a]">
            <Fit w={197} className="text-[24px] leading-[36px]">Activate Windows</Fit>
            <Fit w={285} className="text-[17.5px] leading-[24px]">Go to Settings to activate Windows.</Fit>
          </div>
        </section>
      </main>
      <Taskbar />
    </div>
  );
}
